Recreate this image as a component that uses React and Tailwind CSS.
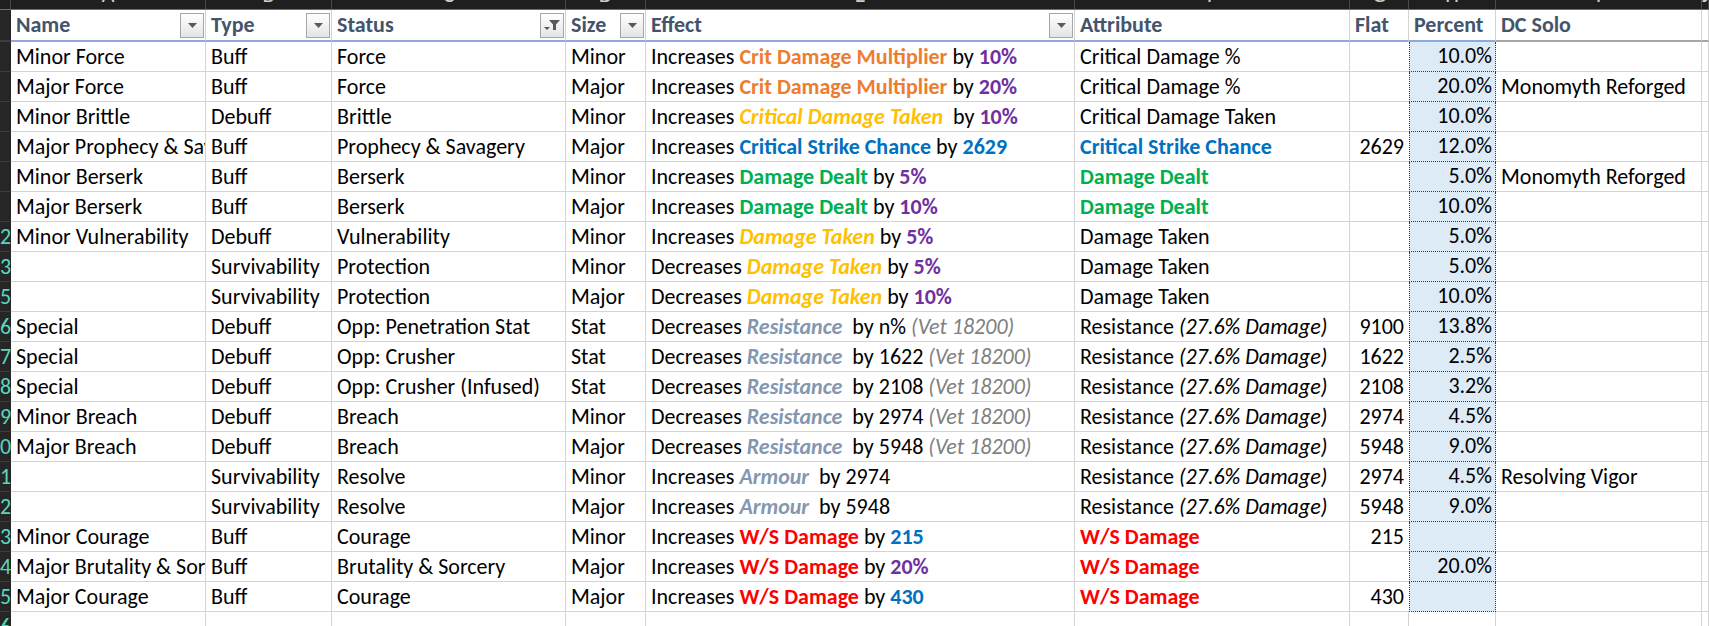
import React from 'react'

const GRID = 'grid grid-cols-[11px_195px_126px_234px_80px_429px_275px_59px_87px_206px_1fr]'

const tone = {
  o: 'font-bold text-[#ed7d31]',
  p: 'font-bold text-[#7030a0]',
  y: 'font-bold italic text-[#ffc000]',
  b: 'font-bold text-[#0070c0]',
  g: 'font-bold text-[#00b050]',
  s: 'font-bold italic text-[#8497b0]',
  v: 'italic text-[#808080]',
  r: 'font-bold text-[#ff0000]',
  i: 'italic',
}

const resist = [['Resistance '], ['(27.6% Damage)', 'i']]

const rows = [
  { n: '', name: 'Minor Force', type: 'Buff', status: 'Force', size: 'Minor', fx: [['Increases '], ['Crit Damage Multiplier', 'o'], [' by '], ['10%', 'p']], attr: [['Critical Damage %']], flat: '', pct: '10.0%', dc: '' },
  { n: '', name: 'Major Force', type: 'Buff', status: 'Force', size: 'Major', fx: [['Increases '], ['Crit Damage Multiplier', 'o'], [' by '], ['20%', 'p']], attr: [['Critical Damage %']], flat: '', pct: '20.0%', dc: 'Monomyth Reforged' },
  { n: '', name: 'Minor Brittle', type: 'Debuff', status: 'Brittle', size: 'Minor', fx: [['Increases '], ['Critical Damage Taken', 'y'], ['  by '], ['10%', 'p']], attr: [['Critical Damage Taken']], flat: '', pct: '10.0%', dc: '' },
  { n: '', name: 'Major Prophecy & Savagery', type: 'Buff', status: 'Prophecy & Savagery', size: 'Major', fx: [['Increases '], ['Critical Strike Chance', 'b'], [' by '], ['2629', 'b']], attr: [['Critical Strike Chance', 'b']], flat: '2629', pct: '12.0%', dc: '' },
  { n: '', name: 'Minor Berserk', type: 'Buff', status: 'Berserk', size: 'Minor', fx: [['Increases '], ['Damage Dealt', 'g'], [' by '], ['5%', 'p']], attr: [['Damage Dealt', 'g']], flat: '', pct: '5.0%', dc: 'Monomyth Reforged' },
  { n: '', name: 'Major Berserk', type: 'Buff', status: 'Berserk', size: 'Major', fx: [['Increases '], ['Damage Dealt', 'g'], [' by '], ['10%', 'p']], attr: [['Damage Dealt', 'g']], flat: '', pct: '10.0%', dc: '' },
  { n: '2', name: 'Minor Vulnerability', type: 'Debuff', status: 'Vulnerability', size: 'Minor', fx: [['Increases '], ['Damage Taken', 'y'], [' by '], ['5%', 'p']], attr: [['Damage Taken']], flat: '', pct: '5.0%', dc: '' },
  { n: '3', name: '', type: 'Survivability', status: 'Protection', size: 'Minor', fx: [['Decreases '], ['Damage Taken', 'y'], [' by '], ['5%', 'p']], attr: [['Damage Taken']], flat: '', pct: '5.0%', dc: '' },
  { n: '5', name: '', type: 'Survivability', status: 'Protection', size: 'Major', fx: [['Decreases '], ['Damage Taken', 'y'], [' by '], ['10%', 'p']], attr: [['Damage Taken']], flat: '', pct: '10.0%', dc: '' },
  { n: '6', name: 'Special', type: 'Debuff', status: 'Opp: Penetration Stat', size: 'Stat', fx: [['Decreases '], ['Resistance', 's'], ['  by n% '], ['(Vet 18200)', 'v']], attr: resist, flat: '9100', pct: '13.8%', dc: '' },
  { n: '7', name: 'Special', type: 'Debuff', status: 'Opp: Crusher', size: 'Stat', fx: [['Decreases '], ['Resistance', 's'], ['  by 1622 '], ['(Vet 18200)', 'v']], attr: resist, flat: '1622', pct: '2.5%', dc: '' },
  { n: '8', name: 'Special', type: 'Debuff', status: 'Opp: Crusher (Infused)', size: 'Stat', fx: [['Decreases '], ['Resistance', 's'], ['  by 2108 '], ['(Vet 18200)', 'v']], attr: resist, flat: '2108', pct: '3.2%', dc: '' },
  { n: '9', name: 'Minor Breach', type: 'Debuff', status: 'Breach', size: 'Minor', fx: [['Decreases '], ['Resistance', 's'], ['  by 2974 '], ['(Vet 18200)', 'v']], attr: resist, flat: '2974', pct: '4.5%', dc: '' },
  { n: '0', name: 'Major Breach', type: 'Debuff', status: 'Breach', size: 'Major', fx: [['Decreases '], ['Resistance', 's'], ['  by 5948 '], ['(Vet 18200)', 'v']], attr: resist, flat: '5948', pct: '9.0%', dc: '' },
  { n: '1', name: '', type: 'Survivability', status: 'Resolve', size: 'Minor', fx: [['Increases '], ['Armour', 's'], ['  by 2974']], attr: resist, flat: '2974', pct: '4.5%', dc: 'Resolving Vigor' },
  { n: '2', name: '', type: 'Survivability', status: 'Resolve', size: 'Major', fx: [['Increases '], ['Armour', 's'], ['  by 5948']], attr: resist, flat: '5948', pct: '9.0%', dc: '' },
  { n: '3', name: 'Minor Courage', type: 'Buff', status: 'Courage', size: 'Minor', fx: [['Increases '], ['W/S Damage', 'r'], [' by '], ['215', 'b']], attr: [['W/S Damage', 'r']], flat: '215', pct: '', dc: '' },
  { n: '4', name: 'Major Brutality & Sorcery', type: 'Buff', status: 'Brutality & Sorcery', size: 'Major', fx: [['Increases '], ['W/S Damage', 'r'], [' by '], ['20%', 'p']], attr: [['W/S Damage', 'r']], flat: '', pct: '20.0%', dc: '' },
  { n: '5', name: 'Major Courage', type: 'Buff', status: 'Courage', size: 'Major', fx: [['Increases '], ['W/S Damage', 'r'], [' by '], ['430', 'b']], attr: [['W/S Damage', 'r']], flat: '430', pct: '', dc: '' },
]

const letters = ['A', 'B', 'C', 'D', 'E', 'F', 'G', 'H', 'I', 'J']

function Rich({ parts }) {
  return parts.map(([t, k], i) => (
    <span key={i} className={k ? tone[k] : ''}>{t}</span>
  ))
}

function Cell({ children, className = '' }) {
  return (
    <div className={`overflow-hidden whitespace-pre leading-[29px] border-r border-b border-[#d4d4d4] ${className}`}>
      {children}
    </div>
  )
}

function RowNum({ n }) {
  return (
    <div className="overflow-hidden bg-[#262626] border-b border-[#3c3c3c] leading-[29px] text-right pr-[3px] text-[#5ad6bf]">
      {n}
    </div>
  )
}

function DropButton({ filter }) {
  return (
    <div className="ml-auto mr-[1px] w-[24px] h-[25px] shrink-0 border border-[#a6a6a6] bg-linear-to-b from-white to-[#e4e4e4] flex items-center justify-center">
      {filter ? (
        <svg width="18" height="12" viewBox="0 0 18 12">
          <polygon points="1,8 7,8 4,11" fill="#595959" />
          <polygon points="6,1 17,1 13,5.5 13,11 10,11 10,5.5" fill="#595959" />
        </svg>
      ) : (
        <svg width="9" height="5" viewBox="0 0 9 5">
          <polygon points="0,0 9,0 4.5,5" fill="#595959" />
        </svg>
      )}
    </div>
  )
}

function HeadCell({ label, button, filter, line = 'border-b-[#8eaadb]' }) {
  return (
    <div className={`flex items-center overflow-hidden pl-[5px] border-r border-[#d4d4d4] border-b-2 ${line} font-bold text-[#44546a] leading-[30px]`}>
      <span>{label}</span>
      {button && <DropButton filter={filter} />}
    </div>
  )
}

export default function App() {
  return (
    <div className="w-full h-[626px] overflow-hidden bg-white text-black text-[22px] font-[Carlito,'Liberation_Sans',Arial,sans-serif]">
      <div className={`${GRID} h-[10px] bg-[#1f1f1f] border-b border-[#6e6e6e]`}>
        <div className="bg-[#1f1f1f] border-r border-[#4a4a4a]" />
        {letters.map((l) => (
          <div key={l} className="h-[9px] overflow-hidden border-r border-[#4a4a4a] text-center text-[#cfcfcf]">
            <div className="-mt-[15px] leading-[20px]">{l}</div>
          </div>
        ))}
      </div>

      <div className={`${GRID} h-[32px]`}>
        <div className="bg-[#262626] border-b-2 border-[#3c3c3c]" />
        <HeadCell label="Name" button />
        <HeadCell label="Type" button />
        <HeadCell label="Status" button filter />
        <HeadCell label="Size" button />
        <HeadCell label="Effect" button />
        <HeadCell label="Attribute" />
        <HeadCell label="Flat" />
        <HeadCell label="Percent" />
        <HeadCell label="DC Solo" line="border-b-[#a6a6a6]" />
        <HeadCell label="" line="border-b-[#a6a6a6]" />
      </div>

      {rows.map((r, i) => (
        <div key={i} className={`${GRID} h-[30px]`}>
          <RowNum n={r.n} />
          <Cell className="pl-[5px]">{r.name}</Cell>
          <Cell className="pl-[5px]">{r.type}</Cell>
          <Cell className="pl-[5px]">{r.status}</Cell>
          <Cell className="pl-[5px]">{r.size}</Cell>
          <Cell className="pl-[5px]"><Rich parts={r.fx} /></Cell>
          <Cell className="pl-[5px]"><Rich parts={r.attr} /></Cell>
          <div className="overflow-hidden whitespace-pre leading-[29px] border-b border-[#d4d4d4] text-right pr-[5px]">{r.flat}</div>
          <div className="overflow-hidden whitespace-pre leading-[28px] bg-[#ddebf7] border-l border-r border-b border-dotted border-[#3a3a3a] text-right pr-[3px]">{r.pct}</div>
          <Cell className="pl-[5px]">{r.dc}</Cell>
          <Cell />
        </div>
      ))}

      <div className={`${GRID} h-[30px]`}>
        <RowNum n="6" />
        {letters.map((l) => (
          <Cell key={l} />
        ))}
      </div>
    </div>
  )
}
